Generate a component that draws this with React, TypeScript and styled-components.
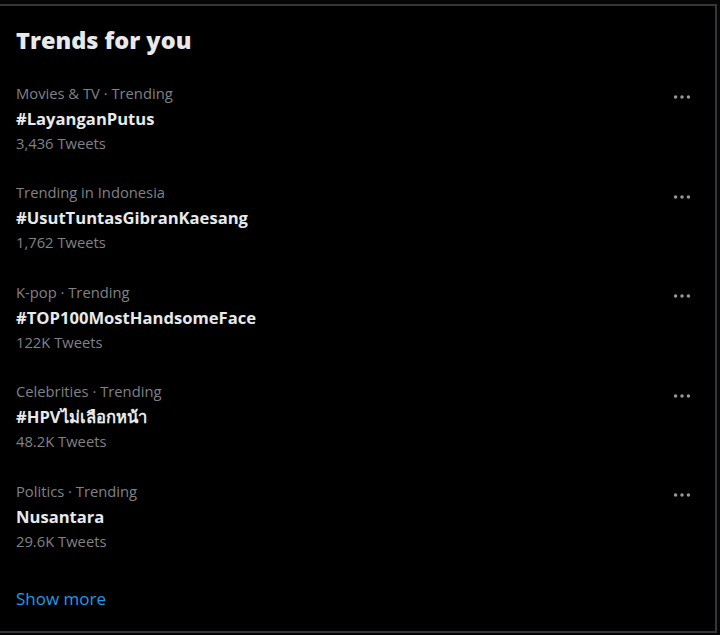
import styled, { createGlobalStyle } from "styled-components";

interface Trend {
  context: string;
  name: string;
  count: string;
}

const trends: Trend[] = [
  { context: "Movies & TV · Trending", name: "#LayanganPutus", count: "3,436 Tweets" },
  { context: "Trending in Indonesia", name: "#UsutTuntasGibranKaesang", count: "1,762 Tweets" },
  { context: "K-pop · Trending", name: "#TOP100MostHandsomeFace", count: "122K Tweets" },
  { context: "Celebrities · Trending", name: "#HPVไม่เลือกหน้า", count: "48.2K Tweets" },
  { context: "Politics · Trending", name: "Nusantara", count: "29.6K Tweets" },
];

const GlobalStyle = createGlobalStyle`
  html, body {
    margin: 0;
    padding: 0;
    background: #050505;
  }
  body {
    font-family: "Open Sans", "Noto Sans", sans-serif;
    color: #e7e9ea;
  }
`;

const Page = styled.div`
  padding-top: 4px;
  height: 635px;
  box-sizing: border-box;
`;

const Panel = styled.section`
  width: 717px;
  height: 629px;
  box-sizing: border-box;
  border-top: 2px solid #34363a;
  border-right: 2px solid #34363a;
  border-bottom: 2px solid #34363a;
  background: #000;
  display: flex;
  flex-direction: column;
`;

const Header = styled.h2`
  margin: 0;
  padding: 19px 16px 13.5px;
  font-size: 23.5px;
  line-height: 30px;
  font-weight: 800;
  color: #e7e9ea;
`;

const Item = styled.div`
  display: flex;
  justify-content: space-between;
  align-items: flex-start;
  padding: 12px 22px 12.5px 16px;
`;

const Texts = styled.div`
  display: flex;
  flex-direction: column;
`;

const Meta = styled.span`
  font-size: 14.75px;
  line-height: 25px;
  color: #808285;
`;

const Name = styled.span`
  font-size: 16.6px;
  line-height: 25px;
  font-weight: 700;
  color: #e7e9ea;
`;

const MoreButton = styled.button`
  border: none;
  background: none;
  padding: 0;
  margin-top: 5.5px;
  width: 22px;
  height: 22px;
  color: #96989b;
  display: flex;
`;

const ShowMore = styled.a`
  display: block;
  padding: 20px 16px;
  font-size: 17px;
  line-height: 25px;
  color: #1d9bf0;
  text-decoration: none;
`;

function Dots() {
  return (
    <svg width="22" height="22" viewBox="0 0 24 24" fill="currentColor">
      <circle cx="5" cy="12" r="1.9" />
      <circle cx="12" cy="12" r="1.9" />
      <circle cx="19" cy="12" r="1.9" />
    </svg>
  );
}

export default function App() {
  return (
    <Page>
      <GlobalStyle />
      <Panel>
        <Header>Trends for you</Header>
        {trends.map((t) => (
          <Item key={t.name}>
            <Texts>
              <Meta>{t.context}</Meta>
              <Name>{t.name}</Name>
              <Meta>{t.count}</Meta>
            </Texts>
            <MoreButton aria-label="More">
              <Dots />
            </MoreButton>
          </Item>
        ))}
        <ShowMore href="#">Show more</ShowMore>
      </Panel>
    </Page>
  );
}
